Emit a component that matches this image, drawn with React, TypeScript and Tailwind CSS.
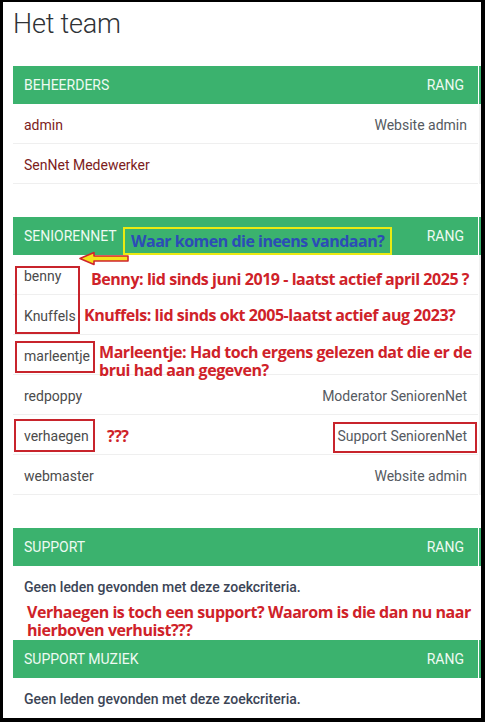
import React from "react";

const ui = { fontFamily: "Roboto, 'Liberation Sans', sans-serif" };
const note = { fontFamily: "'Open Sans', 'Noto Sans', sans-serif" };

function Header({ title, z }: { title: string; z?: boolean }) {
  return (
    <div className={`flex ${z ? "relative z-10" : ""}`}>
      <div className="w-[465px] h-[38px] bg-[#3bb26e] flex items-center justify-between pl-[11px] pr-[14px] text-[14px] text-[#eefaf2]">
        <span>{title}</span>
        <span>RANG</span>
      </div>
      <div className="w-px" />
      <div className="w-[2px] bg-[#3bb26e]" />
    </div>
  );
}

function Row({ name, rank, red }: { name: string; rank?: string; red?: boolean }) {
  return (
    <div className="flex">
      <div className="w-[465px] h-[40px] bg-white border-b border-[#efefef] flex items-center justify-between pl-[11px] pr-[11px] pt-[3px] text-[14px]">
        <span className={red ? "text-[#7c1c1c]" : "text-[#4b4b4b]"}>{name}</span>
        {rank && <span className="text-[#555a61]">{rank}</span>}
      </div>
      <div className="w-px" />
      <div className="w-[2px] bg-[#f1f1f1]" />
    </div>
  );
}

function Empty() {
  return (
    <div className="flex">
      <div className="w-[465px] h-[40px] bg-white flex items-center pl-[11px] pt-[2px] text-[14px] font-medium text-[#3c4556]">
        Geen leden gevonden met deze zoekcriteria.
      </div>
    </div>
  );
}

const red = "absolute text-[#cf2229] font-bold text-[16px] leading-[18px] tracking-[-0.45px] whitespace-nowrap";

export default function App() {
  return (
    <div className="relative w-[485px] h-[722px] bg-white overflow-hidden" style={ui}>
      <div className="pl-[13px] pt-[8px]">
        <h1 className="h-[32px] text-[27px] leading-[32px] font-light text-[#2f3236] tracking-[-0.2px]">Het team</h1>
        <div className="mt-[26px]">
          <Header title="BEHEERDERS" />
          <Row name="admin" rank="Website admin" red />
          <Row name="SenNet Medewerker" red />
        </div>
        <div className="mt-[33px]">
          <Header title="SENIORENNET" />
          <Row name="benny" />
          <Row name="Knuffels" />
          <Row name="marleentje" />
          <Row name="redpoppy" rank="Moderator SeniorenNet" />
          <Row name="verhaegen" rank="Support SeniorenNet" />
          <Row name="webmaster" rank="Website admin" />
        </div>
        <div className="mt-[33px]">
          <Header title="SUPPORT" />
          <Empty />
        </div>
        <div className="mt-[34px] relative z-10">
          <Header title="SUPPORT MUZIEK" />
          <Empty />
        </div>
      </div>

      {/* annotations */}
      <div className="absolute left-[123px] top-[227px] w-[269px] h-[28px] border-2 border-[#eaea12] flex items-center pl-[6px]">
        <span className="text-[#2c4cb6] font-bold text-[16px] leading-[20px] tracking-[-0.5px] whitespace-nowrap" style={note}>
          Waar komen die ineens vandaan?
        </span>
      </div>
      <svg className="absolute left-[78px] top-[251px]" width="52" height="15" viewBox="0 0 52 15">
        <polygon points="2,7.5 16,1.5 16,5 50,5 50,10 16,10 16,13.5" fill="#f5e31a" stroke="#d0262c" strokeWidth="1.6" strokeLinejoin="round" />
      </svg>

      <div className="absolute left-[15px] top-[266px] w-[65px] h-[68px] border-2 border-[#c8242c]" />
      <div className="absolute left-[15px] top-[341px] w-[80px] h-[32px] border-2 border-[#c8242c]" />
      <div className="absolute left-[14px] top-[419px] w-[81px] h-[33px] border-2 border-[#c8242c]" />
      <div className="absolute left-[333px] top-[422px] w-[144px] h-[31px] border-2 border-[#c8242c]" />

      <div className={`${red} left-[91px] top-[270px]`} style={note}>
        Benny: lid sinds juni 2019 - laatst actief april 2025 ?
      </div>
      <div className={`${red} left-[84px] top-[306px]`} style={note}>
        Knuffels: lid sinds okt 2005-laatst actief aug 2023?
      </div>
      <div className={`${red} left-[99px] top-[343px]`} style={note}>
        Marleentje: Had toch ergens gelezen dat die er de
        <br />
        brui had aan gegeven?
      </div>
      <div className={`${red} left-[107px] top-[427px]`} style={note}>
        ???
      </div>
      <div className={`${red} left-[27px] top-[603px] bg-white pr-[4px]`} style={note}>
        Verhaegen is toch een support? Waarom is die dan nu naar
        <br />
        hierboven verhuist???
      </div>

      <div className="absolute inset-0 border-black border-l-[3px] border-t-2 border-r-4 border-b-4 pointer-events-none z-20" />
    </div>
  );
}
